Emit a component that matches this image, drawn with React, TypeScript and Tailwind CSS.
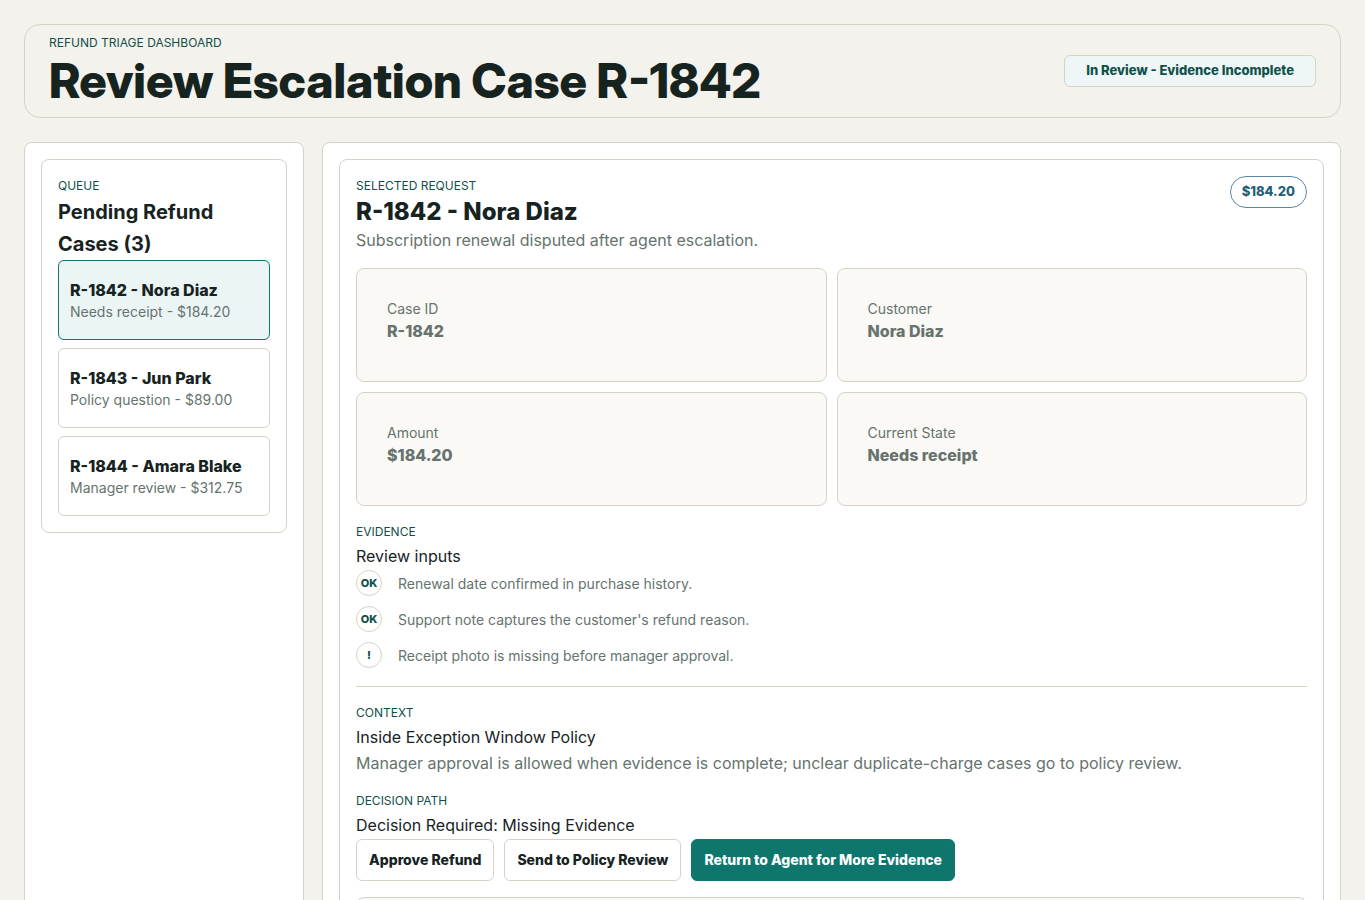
import { useState } from "react";
import type { ReactNode } from "react";
import clsx from "clsx";

const cases = [
  { id: "R-1842", name: "Nora Diaz", state: "Needs receipt", amount: "$184.20" },
  { id: "R-1843", name: "Jun Park", state: "Policy question", amount: "$89.00" },
  { id: "R-1844", name: "Amara Blake", state: "Manager review", amount: "$312.75" },
];

const facts = [
  { label: "Case ID", value: "R-1842" },
  { label: "Customer", value: "Nora Diaz" },
  { label: "Amount", value: "$184.20" },
  { label: "Current State", value: "Needs receipt" },
];

const evidence = [
  { mark: "OK", text: "Renewal date confirmed in purchase history." },
  { mark: "OK", text: "Support note captures the customer's refund reason." },
  { mark: "!", text: "Receipt photo is missing before manager approval." },
];

const decisions = [
  { label: "Approve Refund", primary: false },
  { label: "Send to Policy Review", primary: false },
  { label: "Return to Agent for More Evidence", primary: true },
];

const Eyebrow = ({ children }: { children: ReactNode }) => (
  <p className="text-xs leading-5 uppercase text-[#115049]">{children}</p>
);

const Header = () => (
  <header className="flex items-center justify-between gap-6 rounded-2xl border border-[#d8d2c4] px-6 py-2">
    <div>
      <Eyebrow>Refund Triage Dashboard</Eyebrow>
      <h1 className="font-['Inter_Display','Inter',sans-serif] text-5xl leading-14 font-extrabold">
        Review Escalation Case R-1842
      </h1>
    </div>
    <span className="flex h-8 shrink-0 items-center rounded-md border border-[#d8d2c4] bg-[#eef6f8] px-[21px] text-[13px] font-extrabold text-[#115049]">
      In Review - Evidence Incomplete
    </span>
  </header>
);

const Queue = () => {
  const [selected, setSelected] = useState("R-1842");

  return (
    <aside className="rounded-lg border border-[#d8d2c4] bg-white p-4">
      <div className="rounded-lg border border-[#d8d2c4] p-4">
        <Eyebrow>Queue</Eyebrow>
        <h2 className="text-xl leading-8 font-bold">Pending Refund Cases (3)</h2>
        <div className="flex flex-col gap-2">
          {cases.map((item) => (
            <button
              key={item.id}
              type="button"
              onClick={() => setSelected(item.id)}
              className={clsx(
                "flex min-h-20 flex-col rounded-md border px-[11px] pt-[18px] pb-4 text-left",
                item.id === selected
                  ? "border-[#0f766e] bg-[#ecf5f6]"
                  : "border-[#d8d2c4] bg-white"
              )}
            >
              <span className="text-base leading-[22px] font-extrabold">
                {item.id} - {item.name}
              </span>
              <span className="text-sm leading-[22px] text-[#66736e]">
                {item.state} - {item.amount}
              </span>
            </button>
          ))}
        </div>
      </div>
    </aside>
  );
};

const Detail = () => (
  <main className="rounded-lg border border-[#d8d2c4] bg-white p-4">
    <div className="rounded-lg border border-[#d8d2c4] p-4">
      <div className="flex items-start justify-between gap-4">
        <div>
          <Eyebrow>Selected Request</Eyebrow>
          <h2 className="text-2xl leading-8 font-extrabold">R-1842 - Nora Diaz</h2>
          <p className="text-base leading-6 text-[#66736e]">
            Subscription renewal disputed after agent escalation.
          </p>
        </div>
        <span className="flex h-8 items-center rounded-full border border-[#5b8a9c] px-[11px] text-[13px] font-extrabold text-[#255f7a]">
          $184.20
        </span>
      </div>

      <dl className="mt-4 grid grid-cols-2 gap-2.5">
        {facts.map((fact) => (
          <div
            key={fact.label}
            className="min-h-[114px] rounded-lg border border-[#d8d2c4] bg-[#faf9f5] px-[30px] py-[29px] text-[#66736e]"
          >
            <dt className="text-sm leading-[22px]">{fact.label}</dt>
            <dd className="text-base leading-[22px] font-extrabold">{fact.value}</dd>
          </div>
        ))}
      </dl>

      <section className="mt-4 border-b border-[#d8d2c4] pb-4">
        <Eyebrow>Evidence</Eyebrow>
        <h3 className="text-base leading-7">Review inputs</h3>
        <ul className="flex flex-col gap-2">
          {evidence.map((item) => (
            <li key={item.text} className="flex items-start gap-4">
              <span className="flex size-[26px] items-center justify-center rounded-full border border-[#d8d2c4] text-[11px] font-extrabold text-[#115049]">
                {item.mark}
              </span>
              <span className="text-sm leading-7 text-[#66736e]">{item.text}</span>
            </li>
          ))}
        </ul>
      </section>

      <section className="mt-4">
        <Eyebrow>Context</Eyebrow>
        <h3 className="text-base leading-7">Inside Exception Window Policy</h3>
        <p className="text-base leading-6 text-[#66736e]">
          Manager approval is allowed when evidence is complete; unclear
          duplicate-charge cases go to policy review.
        </p>
      </section>

      <section className="mt-4">
        <Eyebrow>Decision Path</Eyebrow>
        <h3 className="text-base leading-7">Decision Required: Missing Evidence</h3>
        <div className="flex flex-wrap gap-2.5">
          {decisions.map((item) => (
            <button
              key={item.label}
              type="button"
              className={clsx(
                "h-[42px] rounded-md border px-3 text-sm font-extrabold",
                item.primary
                  ? "border-[#0f766e] bg-[#0f766e] text-white"
                  : "border-[#d8d2c4] bg-white"
              )}
            >
              {item.label}
            </button>
          ))}
        </div>
        <div className="mt-4 min-h-20 rounded-lg border border-[#d8d2c4] bg-[#f7faf8]"></div>
      </section>
    </div>
  </main>
);

const App = () => (
  <div className="min-h-screen bg-[#f4f2ec] p-6 font-['Inter',sans-serif] text-[#17231f]">
    <Header />
    <div className="mt-6 grid grid-cols-[280px_minmax(0,1fr)] gap-[18px]">
      <Queue />
      <Detail />
    </div>
  </div>
);

export default App;
